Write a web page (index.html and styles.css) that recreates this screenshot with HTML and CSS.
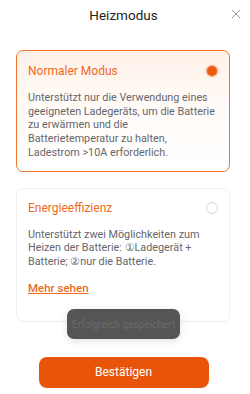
FILE: index.html
```html
<!DOCTYPE html>
<html>
<head>
<meta charset="utf-8">
<link rel="stylesheet" href="styles.css">
</head>
<body>
<div class="page">
  <header class="header">
    <div class="title">Heizmodus</div>
    <svg class="close" width="10" height="10" viewBox="0 0 10 10"><path d="M1 1L9 9M9 1L1 9" stroke="#9a9a9a" stroke-width="1" fill="none"/></svg>
  </header>
  <div class="cards">
    <div class="card active">
      <div class="card-head">
        <span class="card-title">Normaler Modus</span>
        <span class="radio on"></span>
      </div>
      <p class="desc">Unterstützt nur die Verwendung eines geeigneten Ladegeräts, um die Batterie zu erwärmen und die Batterietemperatur zu halten, Ladestrom &gt;10A erforderlich.</p>
    </div>
    <div class="card">
      <div class="card-head">
        <span class="card-title">Energieeffizienz</span>
        <span class="radio"></span>
      </div>
      <p class="desc">Unterstützt zwei Möglichkeiten zum Heizen der Batterie: ①Ladegerät + Batterie; ②nur die Batterie.</p>
      <a class="more">Mehr sehen</a>
    </div>
  </div>
  <div class="footer">
    <button class="confirm">Bestätigen</button>
  </div>
  <div class="toast">Erfolgreich gespeichert</div>
</div>
</body>
</html>
```
FILE: styles.css
```css
html, body {
  margin: 0;
  padding: 0;
  background: #fff;
}
body {
  font-family: Roboto, "Noto Sans", sans-serif;
  width: 250px;
  height: 394px;
  overflow: hidden;
}
.page {
  position: relative;
  width: 247px;
  height: 394px;
}
.header {
  position: relative;
  height: 50px;
  display: flex;
  justify-content: center;
}
.title {
  margin-top: 7px;
  font-size: 13.5px;
  line-height: 16px;
  color: #222;
}
.close {
  position: absolute;
  right: 6px;
  top: 9px;
}
.cards {
  display: flex;
  flex-direction: column;
  gap: 16px;
  padding: 0 17px 0 16px;
}
.card {
  border: 1px solid #efeff2;
  border-radius: 7px;
  padding: 12px 11px 26px 11px;
  background: #fff;
}
.card.active {
  border-color: #f07430;
  background: linear-gradient(180deg, #fff1e8 0%, #fffaf6 40%, #ffffff 100%);
  padding-bottom: 11px;
  padding-top: 13px;
}
.card-head {
  display: flex;
  justify-content: space-between;
  align-items: center;
  height: 14px;
}
.card-title {
  font-size: 12px;
  color: #ee6a1e;
  line-height: 14px;
}
.radio {
  width: 12px;
  height: 12px;
  border: 1px solid #d8d8dc;
  border-radius: 50%;
  box-sizing: border-box;
  margin-right: 0;
}
.radio.on {
  width: 10px;
  height: 10px;
  border: none;
  background: #ec5a10;
  box-shadow: 0 0 0 1.5px #fbc3a2;
  margin-right: 1px;
}
.desc {
  margin: 13px 0 0;
  font-size: 10.8px;
  line-height: 13.7px;
  color: #66666b;
}
.more {
  display: block;
  margin-top: 12px;
  font-size: 11.5px;
  font-weight: 500;
  line-height: 14px;
  color: #ee6a1e;
  text-decoration: underline;
}
.footer {
  display: flex;
  justify-content: center;
  padding-top: 35px;
}
.confirm {
  width: 170px;
  height: 31px;
  border: none;
  border-radius: 8px;
  background: #e8540a;
  color: #fff;
  font-family: Roboto, "Noto Sans", sans-serif;
  font-size: 12px;
  padding: 0;
}
.toast {
  position: absolute;
  left: 67px;
  top: 309px;
  width: 113px;
  height: 30px;
  border-radius: 7px;
  background: #555556;
  color: #6a6a6c;
  font-size: 10px;
  display: flex;
  align-items: center;
  justify-content: center;
  box-shadow: 0 2px 8px rgba(0,0,0,0.12);
}
```
